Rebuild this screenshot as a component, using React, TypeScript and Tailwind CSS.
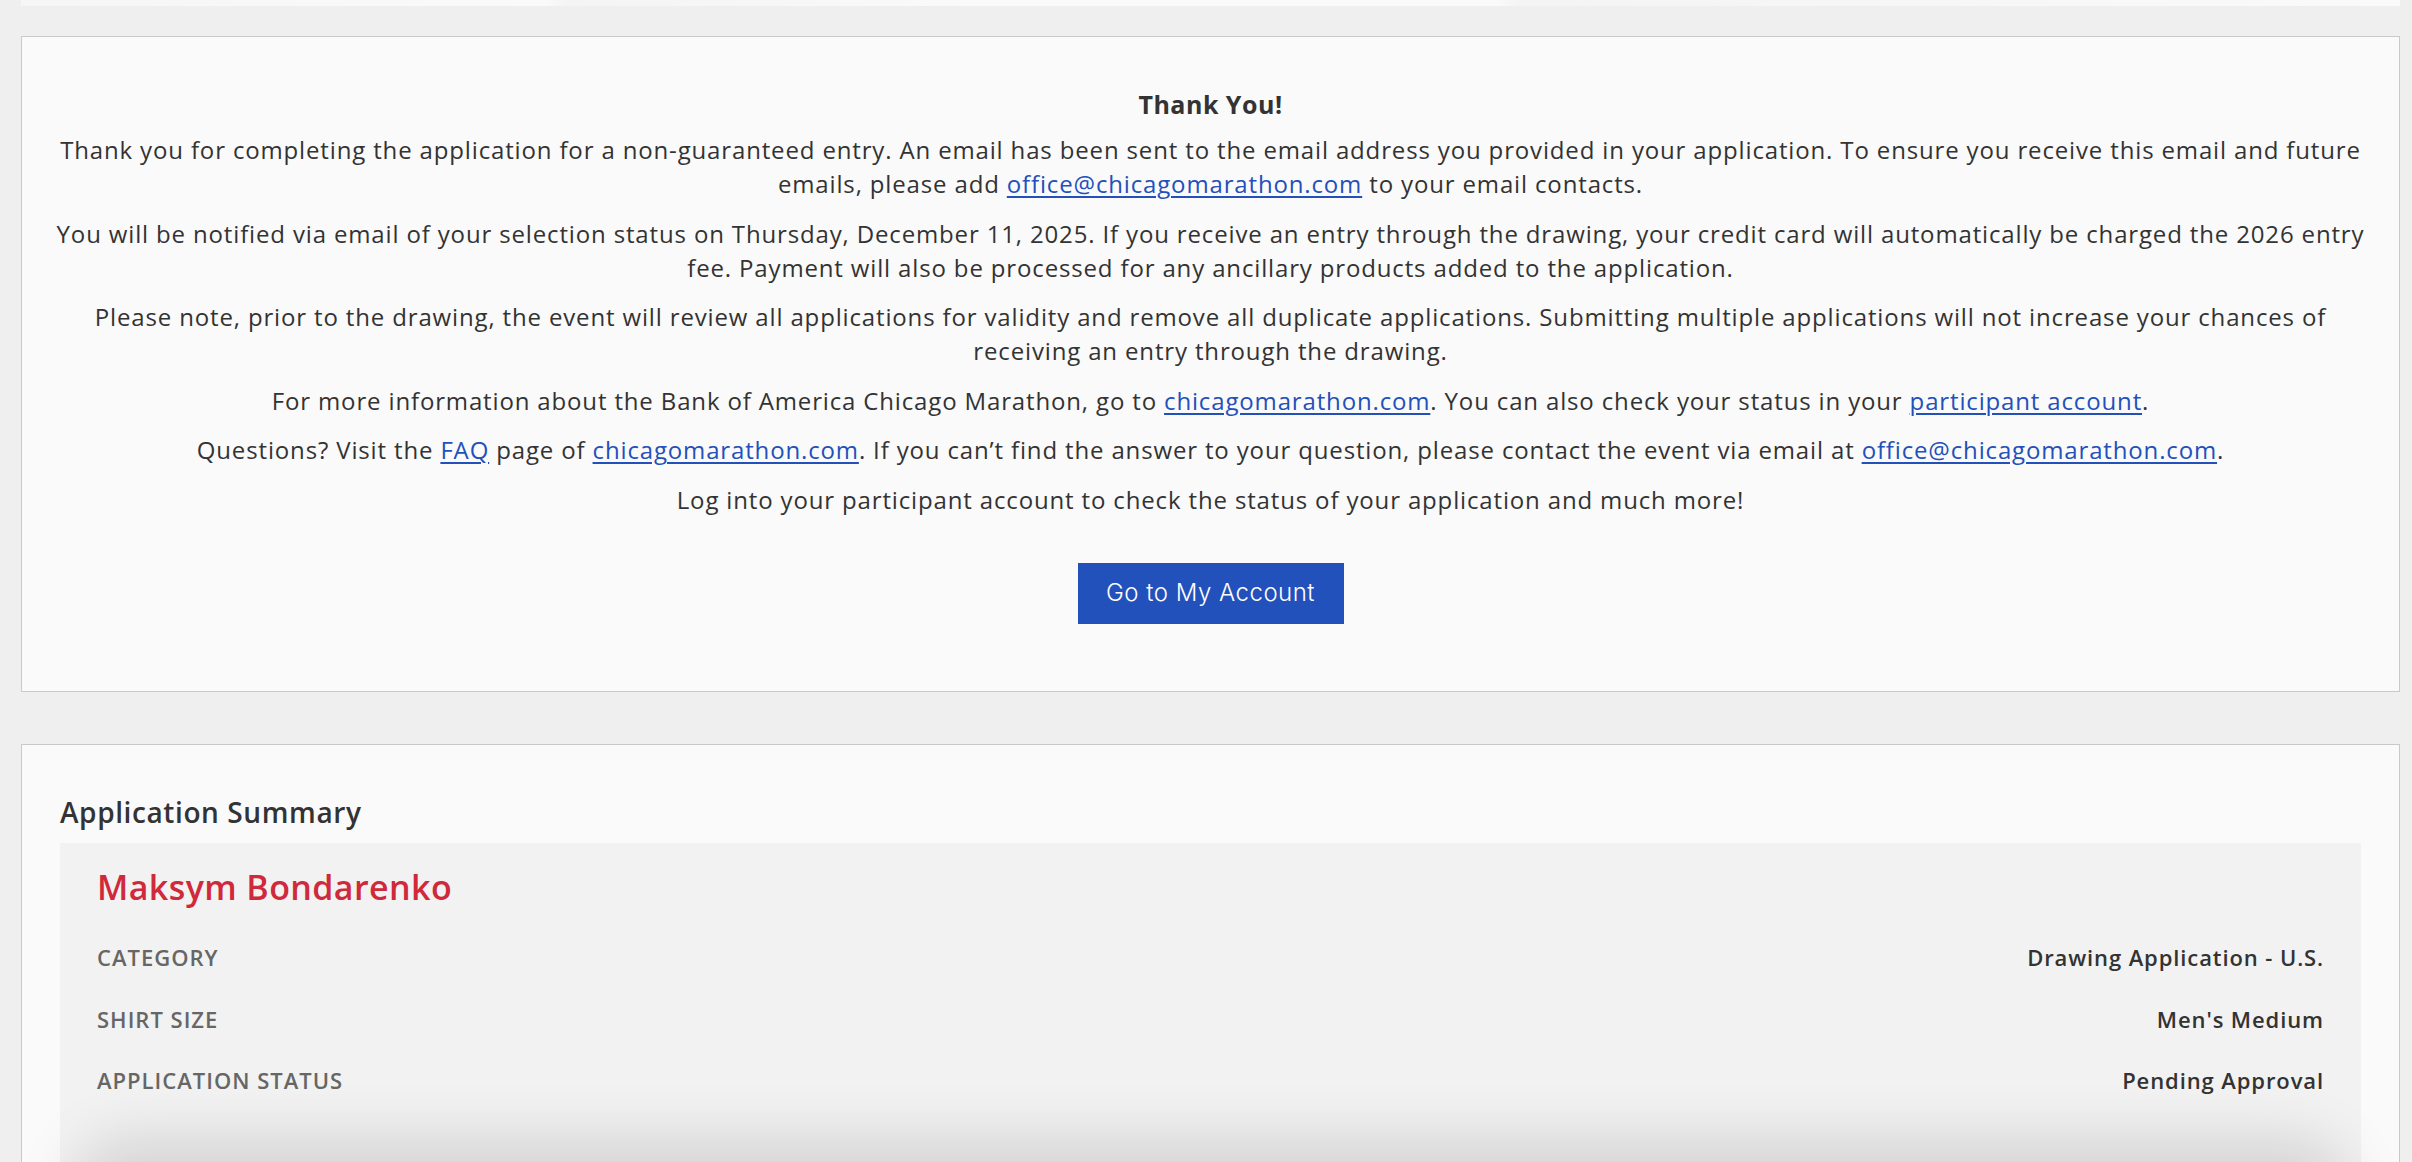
import React from "react";

const font = { fontFamily: '"Open Sans", "Liberation Sans", sans-serif' };

function A({ children }: { children: React.ReactNode }) {
  return (
    <a href="#" className="text-[#2350bb] underline underline-offset-[3px] decoration-[1.5px]">
      {children}
    </a>
  );
}

function Row({ label, value }: { label: string; value: string }) {
  return (
    <div className="flex h-[61.5px] items-center justify-between">
      <span className="text-[22px] font-semibold uppercase tracking-[1px] text-[#666]">{label}</span>
      <span className="text-[22px] font-semibold tracking-[0.9px] text-[#333]">{value}</span>
    </div>
  );
}

export default function App() {
  return (
    <div className="min-h-screen overflow-hidden bg-[#efefef] text-[#333]" style={font}>
      {/* tail of the card above */}
      <div className="ml-[21px] mr-[12px] h-[6px] bg-[linear-gradient(90deg,#f6f6f6,#fafafa_22%,#f4f4f4_23%,#fafafa_40%,#fafafa_62%,#f4f4f4_63%,#fafafa)]" />

      {/* Thank you card */}
      <section className="ml-[21px] mr-[12px] mt-[30px] border border-[#c9c9c9] bg-[#fafafa] px-[30px] pb-[67px] pt-[51px] text-center">
        <h2 className="text-[25px] font-bold leading-[32px] tracking-[0.5px]">Thank You!</h2>
        <div className="mt-[13px] space-y-[15.6px] text-[24px] leading-[34px] tracking-[0.85px]">
          <p>
            Thank you for completing the application for a non-guaranteed entry. An email has been sent to the email
            address you provided in your application. To ensure you receive this email and future
            <br />
            emails, please add <A>office@chicagomarathon.com</A> to your email contacts.
          </p>
          <p>
            You will be notified via email of your selection status on Thursday, December 11, 2025. If you receive an
            entry through the drawing, your credit card will automatically be charged the 2026 entry
            <br />
            fee. Payment will also be processed for any ancillary products added to the application.
          </p>
          <p>
            Please note, prior to the drawing, the event will review all applications for validity and remove all
            duplicate applications. Submitting multiple applications will not increase your chances of
            <br />
            receiving an entry through the drawing.
          </p>
          <p>
            For more information about the Bank of America Chicago Marathon, go to <A>chicagomarathon.com</A>. You can
            also check your status in your <A>participant account</A>.
          </p>
          <p>
            Questions? Visit the <A>FAQ</A> page of <A>chicagomarathon.com</A>. If you can’t find the answer to your
            question, please contact the event via email at <A>office@chicagomarathon.com</A>.
          </p>
          <p>Log into your participant account to check the status of your application and much more!</p>
        </div>
        <button
          type="button"
          className="mt-[46px] inline-flex h-[61px] w-[266px] items-center justify-center bg-[#2351bb] text-[24px] tracking-[0.5px] text-white"
          style={{ fontFamily: 'Inter, "Open Sans", sans-serif', fontWeight: 300 }}
        >
          Go to My Account
        </button>
      </section>

      {/* Application summary */}
      <section className="ml-[21px] mr-[12px] mt-[52px] border border-[#c9c9c9] bg-[#fafafa] px-[38px] pt-[50px]">
        <h3 className="text-[28px] font-semibold leading-[34px] tracking-[0.6px]">Application Summary</h3>
        <div className="mt-[14px] bg-[#f2f2f2] px-[37px] pt-[22px]">
          <div className="text-[34px] font-semibold leading-[44px] tracking-[0.4px] text-[#d0293b]">
            Maksym Bondarenko
          </div>
          <div className="mt-[18px]">
            <Row label="Category" value="Drawing Application - U.S." />
            <Row label="Shirt Size" value="Men's Medium" />
            <Row label="Application Status" value="Pending Approval" />
          </div>
          <div className="mt-[53px] h-[200px] rounded-[30px] bg-[#f2f2f2] shadow-[0_0_60px_25px_rgba(0,0,0,0.13)]" />
        </div>
      </section>
    </div>
  );
}
